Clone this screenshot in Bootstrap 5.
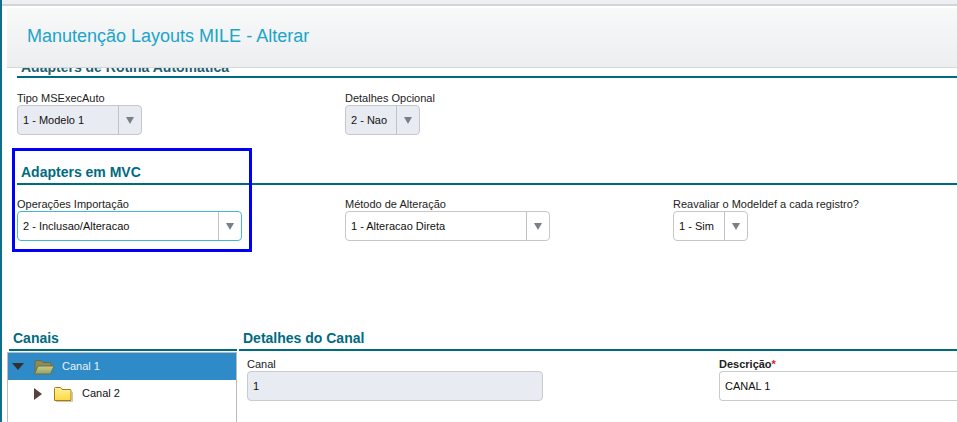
<!DOCTYPE html>
<html lang="pt-BR">
<head>
<meta charset="utf-8">
<title>Manutenção Layouts MILE - Alterar</title>
<link href="https://cdn.jsdelivr.net/npm/bootstrap@5.3.0/dist/css/bootstrap.min.css" rel="stylesheet">
<style>
html,body{height:422px;overflow:hidden;background:#fff}
body{font-family:"Liberation Sans",Arial,sans-serif;font-size:11px;color:#222;border-left:2px solid #0e6f8a;position:relative}
.topband{height:6px;background:#edeff1;border-bottom:2px solid #d3d6d9}
.pagehead{position:relative;z-index:2;margin:2px 0 0 5px;height:60px;background:linear-gradient(#f8f9f9,#eceef0);border-bottom:1px solid #d5d8da;padding-left:20px}
.pagehead h1{font-family:"Liberation Sans",Arial,sans-serif;font-size:18px;font-weight:400;color:#1ba5c9;line-height:56px;margin:0}
.secthead{margin:0 0 0 15px;border-bottom:2px solid #006b7f;color:#006b7f;font-family:"Liberation Sans",Arial,sans-serif;font-size:14px;font-weight:700;line-height:16px;padding:0 0 3px 4px}
.first{margin-top:-9px;height:19px;color:#1d5f70}
.second{margin-top:29px}
.fieldgrid{display:grid;grid-template-columns:328px 328px 1fr;margin-left:15px}
.first + .fieldgrid{margin-top:14px}
.second + .fieldgrid{margin-top:13px}
.lbl{display:block;line-height:13px;margin-bottom:0;color:#222}
.combo{height:30px;border:1px solid #c4c7cb;border-radius:4px;background:#fff;line-height:28px;font-size:11px;color:#111}
.combo.ro{background:#e8ebf2}
.combo.on{border-color:#45b5d6}
.combo .val{padding-left:5px;flex:1 1 auto;white-space:nowrap}
.combo .btnpart{width:23px;flex:none;height:28px;border-left:1px solid #bfc2c6;display:flex;align-items:center;justify-content:center}
.tri{width:0;height:0;border-left:4.5px solid transparent;border-right:4.5px solid transparent;border-top:7px solid #7a808a;display:block}
.w125{width:125px}.w75{width:75px}.w225{width:225px}.w205{width:205px}
.markup{position:absolute;left:10px;top:148px;width:240px;height:104px;border:3px solid #0000f5;z-index:3}
.lower{display:grid;grid-template-columns:228px 1fr;column-gap:2px;margin:89px 0 0 7px}
.lower .secthead{margin:0;padding:0 0 3px 4px;font-size:14px;line-height:16px}
.treebox{margin:1px 0 0 -2px;border:1px solid #b9bcbf;border-bottom:0;height:80px;width:230px;font-size:11px}
.treerow{height:27px;display:flex;align-items:center}
.treerow.sel{background:#2e8bc7;color:#e8f2f8}
.arrow-d{width:0;height:0;border-left:6px solid transparent;border-right:6px solid transparent;border-top:7px solid #33302f;margin-left:4px}
.arrow-r{width:0;height:0;border-top:6px solid transparent;border-bottom:6px solid transparent;border-left:8px solid #5a403c;margin-left:26px}
.foldopen{margin-left:9px}
.foldshut{margin-left:11px}
.name1{margin-left:7px}
.name2{margin-left:9px;color:#111}
.detail{display:grid;grid-template-columns:472px 1fr;padding-left:8px;padding-top:7px}
.detail .lbl{margin-bottom:0}
.inp{height:30px;border:1px solid #c8cbce;border-radius:4px;line-height:28px;padding-left:5px;font-size:11px;color:#111}
.inp.ro{background:#e8ebf2;width:296px}
.inp.wide{width:260px;border-right:0;border-radius:4px 0 0 4px}
.req{color:#e0202a}
</style>
</head>
<body>
<div class="topband"></div>
<header class="pagehead d-flex align-items-start"><h1>Manutenção Layouts MILE - Alterar</h1></header>

<h2 class="secthead first">Adapters de Rotina Automatica</h2>
<div class="fieldgrid">
  <div>
    <label class="lbl">Tipo MSExecAuto</label>
    <div class="combo ro w125 d-flex"><span class="val">1 - Modelo 1</span><span class="btnpart"><i class="tri"></i></span></div>
  </div>
  <div>
    <label class="lbl">Detalhes Opcional</label>
    <div class="combo ro w75 d-flex"><span class="val">2 - Nao</span><span class="btnpart"><i class="tri"></i></span></div>
  </div>
  <div></div>
</div>

<h2 class="secthead second">Adapters em MVC</h2>
<div class="fieldgrid">
  <div>
    <label class="lbl">Operações Importação</label>
    <div class="combo on w225 d-flex"><span class="val">2 - Inclusao/Alteracao</span><span class="btnpart"><i class="tri"></i></span></div>
  </div>
  <div>
    <label class="lbl">Método de Alteração</label>
    <div class="combo w205 d-flex"><span class="val">1 - Alteracao Direta</span><span class="btnpart"><i class="tri"></i></span></div>
  </div>
  <div>
    <label class="lbl">Reavaliar o Modeldef a cada registro?</label>
    <div class="combo w75 d-flex"><span class="val">1 - Sim</span><span class="btnpart"><i class="tri"></i></span></div>
  </div>
</div>
<div class="markup"></div>

<div class="lower">
  <div>
    <h2 class="secthead">Canais</h2>
    <div class="treebox">
      <div class="treerow sel">
        <i class="arrow-d"></i>
        <svg class="foldopen" width="22" height="16" viewBox="0 0 22 16"><defs><linearGradient id="gOpen" x1="0" y1="0" x2="0" y2="1"><stop offset="0" stop-color="#c6d08e"/><stop offset="1" stop-color="#97a061"/></linearGradient></defs><path d="M2 14.500 V2.500 q0-1 1-1 h5 l2 2 h7 q1 0 1 1 V8 H6 Z" fill="#8b8b5c" stroke="#6a6a45"/><path d="M1.500 15 L5 7 H21 L17.500 15 Z" fill="url(#gOpen)" stroke="#6f6f48"/></svg>
        <span class="name1">Canal 1</span>
      </div>
      <div class="treerow">
        <i class="arrow-r"></i>
        <svg class="foldshut" width="20" height="16" viewBox="0 0 20 16"><defs><linearGradient id="gShut" x1="0" y1="0" x2="0" y2="1"><stop offset="0" stop-color="#fff2a0"/><stop offset="1" stop-color="#ffd83a"/></linearGradient></defs><path d="M1.500 14.500 V2.500 q0-1 1-1 h5 l1.500 2 h8 q1 0 1 1 V14.500 Z" fill="url(#gShut)" stroke="#a87a14"/><path d="M3 15.500 H19.500 V6" fill="none" stroke="#9b8d6a" stroke-opacity=".5"/></svg>
        <span class="name2">Canal 2</span>
      </div>
    </div>
  </div>
  <div>
    <h2 class="secthead">Detalhes do Canal</h2>
    <div class="detail">
      <div>
        <label class="lbl">Canal</label>
        <div class="inp ro">1</div>
      </div>
      <div>
        <label class="lbl fw-bold">Descrição<span class="req">*</span></label>
        <div class="inp wide">CANAL 1</div>
      </div>
    </div>
  </div>
</div>
<script src="https://cdn.jsdelivr.net/npm/bootstrap@5.3.0/dist/js/bootstrap.bundle.min.js"></script>
</body>
</html>
